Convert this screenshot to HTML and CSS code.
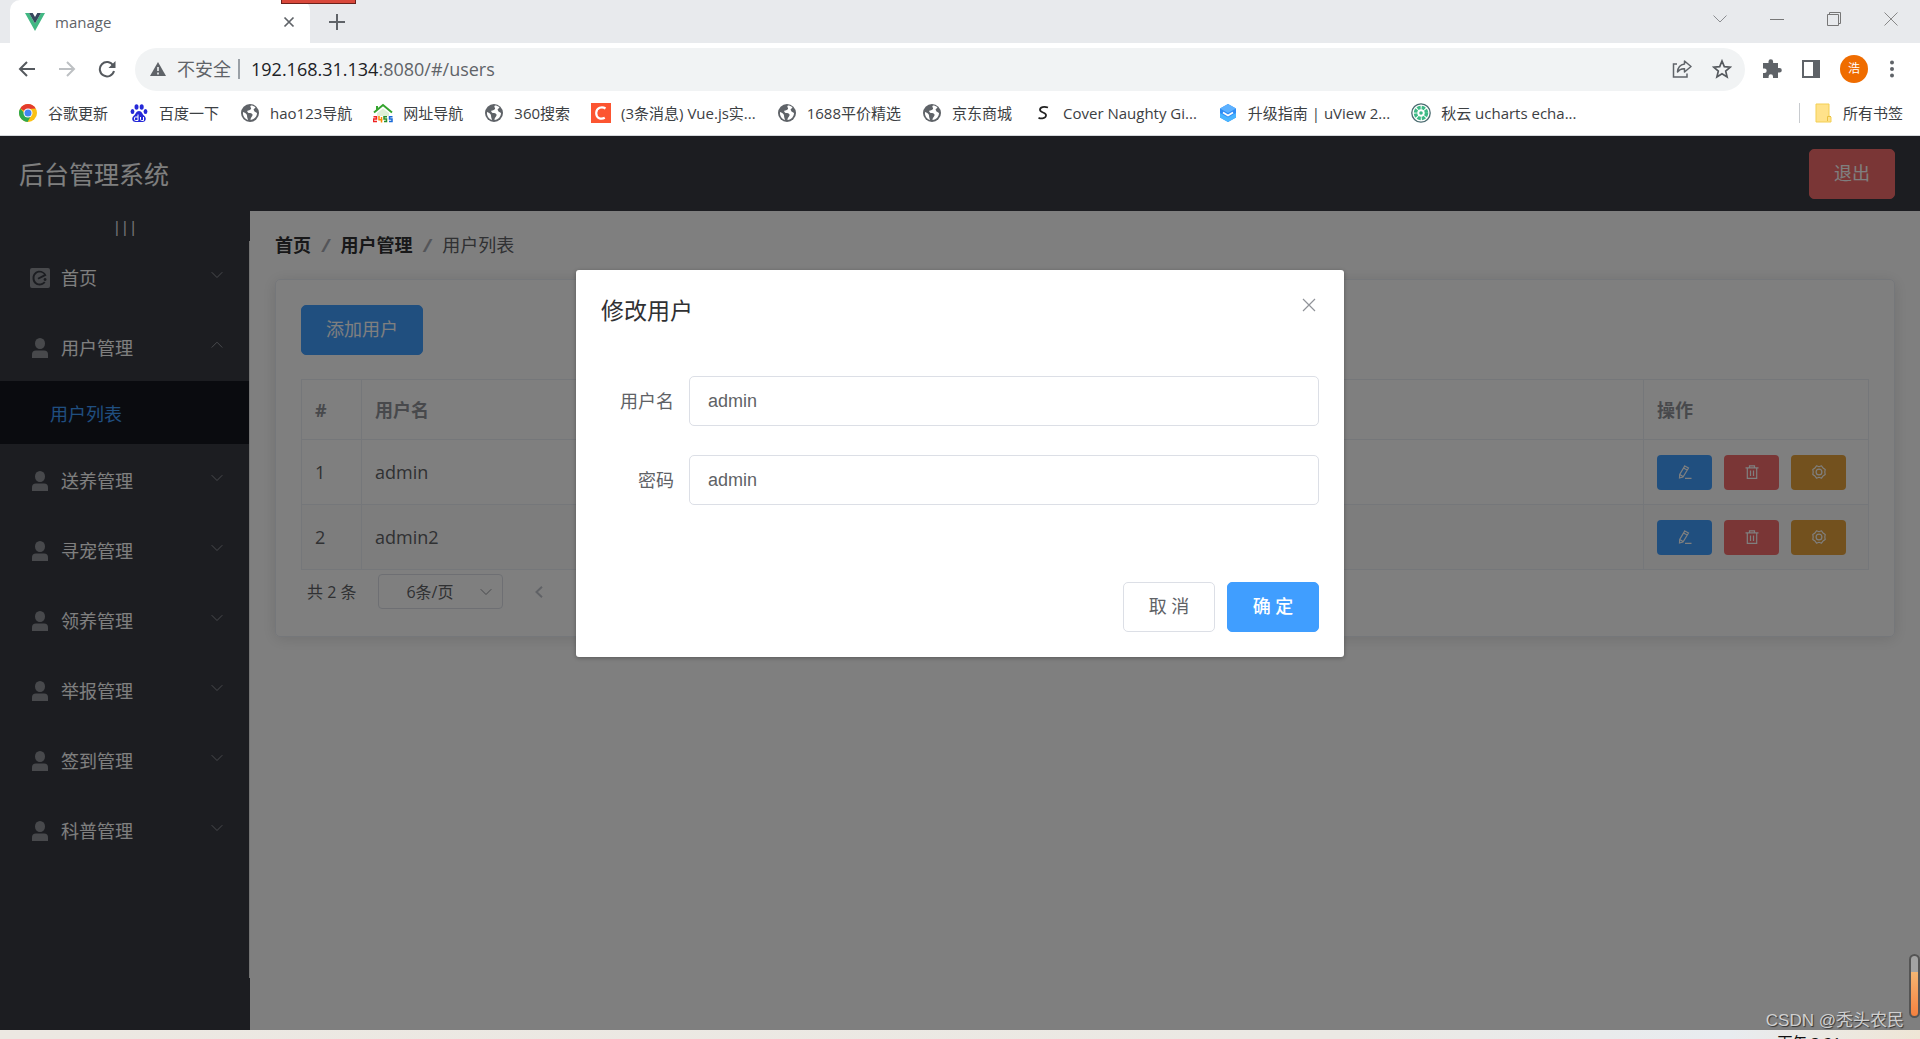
FILE: index.html
```html
<!DOCTYPE html>
<html lang="zh-CN">
<head>
<meta charset="utf-8">
<title>manage</title>
<link rel="stylesheet" href="styles.css">
</head>
<body>
<svg class="sprite" aria-hidden="true">
  <symbol id="globe" viewBox="0 0 20 20"><circle cx="10" cy="10" r="9" fill="#5f6368"/><path d="M11 2.500C9 4 12.500 5 10.500 6.500S6.500 7 7.500 9s4.500.5 5 2.500-2 2.500-2 5.500c4-.5 6.500-3.500 6.500-7l-2.500-1.500-1-2 2-2C14 3 12.500 2.500 11 2.500zM3 9c1.500.5 4 1.500 4 3.500S8 16 8 17c-3-1-5.500-4-5-8z" fill="#fff"/></symbol>
  <symbol id="user" viewBox="0 0 20 20"><ellipse cx="10" cy="5.500" rx="5" ry="5.500"/><path d="M2 20v-3.500Q2 12.500 6 12.500h8q4 0 4 4V20z"/></symbol>
  <symbol id="down" viewBox="0 0 12 8"><path d="M.7 1.200 6 6.500l5.300-5.300" fill="none" stroke="currentColor"/></symbol>
  <symbol id="up" viewBox="0 0 12 8"><path d="M.7 6.500 6 1.200l5.300 5.300" fill="none" stroke="currentColor"/></symbol>
  <symbol id="edit" viewBox="0 0 14 14"><path d="M6.800.9 10.500 3 5 12l-3.500 1 .2-3.600zM5.500 3l3.700 2.100M1.800 9.400 5 11.500M7 13.300h6.500" fill="none" stroke="currentColor" stroke-width="1.200"/></symbol>
  <symbol id="trash" viewBox="0 0 14 14"><path d="M.5 2.800h13M4.500 2.500V.8h5v1.700M2.300 3v10.300h9.400V3M5.500 5.500v5.500M8.500 5.500v5.500" fill="none" stroke="currentColor" stroke-width="1.200"/></symbol>
  <symbol id="gear" viewBox="0 0 14 14"><circle cx="7" cy="7" r="2.900" fill="none" stroke="currentColor" stroke-width="1.200"/><path d="M4.500.8 7 1.700l2.500-.9L11 3l2.200 1.500L12.800 7l.4 2.500L11 11l-1.500 2.200L7 12.300l-2.500.9L3 11 .8 9.500 1.200 7 .8 4.500 3 3z" fill="none" stroke="currentColor" stroke-width="1.200" stroke-linejoin="round"/></symbol>
</svg>

<header class="browser">
  <div class="tabstrip">
    <div class="tab">
      <svg width="20" height="18" viewBox="0 0 20 18"><path d="M0 0h4l6 10.500L16 0h4L10 18z" fill="#41b883"/><path d="M4 0h3.700L10 4l2.300-4H16l-6 10.500z" fill="#35495e"/></svg>
      <span class="tab-title">manage</span>
      <button class="icon-btn" aria-label="关闭标签页"><svg width="12" height="12" viewBox="0 0 12 12"><path d="m1.500 1.500 9 9m0-9-9 9" stroke="#5f6368" stroke-width="1.700"/></svg></button>
    </div>
    <button class="icon-btn new-tab" aria-label="新标签页"><svg width="16" height="16" viewBox="0 0 16 16"><path d="M8 0v16M0 8h16" stroke="#5f6368" stroke-width="2"/></svg></button>
    <span class="recorder"></span>
    <div class="window-controls">
      <button class="icon-btn" aria-label="搜索标签页"><svg width="14" height="14" viewBox="0 0 14 14"><path d="m.5 3.500 6.500 6.500 6.500-6.500" fill="none" stroke="#8b8d91"/></svg></button>
      <button class="icon-btn" aria-label="最小化"><svg width="14" height="14" viewBox="0 0 14 14"><path d="M0 7.500h14" stroke="#777"/></svg></button>
      <button class="icon-btn" aria-label="还原"><svg width="14" height="14" viewBox="0 0 14 14"><path d="M.5 2.500h11v11H.5zM2.500 2.500v-2h11v11h-2" fill="none" stroke="#777"/></svg></button>
      <button class="icon-btn" aria-label="关闭"><svg width="14" height="14" viewBox="0 0 14 14"><path d="m.5.5 13 13m0-13-13 13" stroke="#888"/></svg></button>
    </div>
  </div>
  <div class="toolbar">
    <div class="nav">
      <button class="icon-btn" aria-label="后退"><svg width="18" height="18" viewBox="0 0 18 18"><path d="M17 9H2m7-7L2 9l7 7" fill="none" stroke="#55595e" stroke-width="2"/></svg></button>
      <button class="icon-btn" aria-label="前进"><svg width="18" height="18" viewBox="0 0 18 18"><path d="M1 9h15M9 2l7 7-7 7" fill="none" stroke="#bdc0c3" stroke-width="2"/></svg></button>
      <button class="icon-btn" aria-label="刷新"><svg width="18" height="18" viewBox="0 0 18 18"><path d="M15.200 5.500A7.200 7.200 0 1 0 16 11" fill="none" stroke="#55595e" stroke-width="2"/><path d="M17.500 1v7h-7z" fill="#55595e"/></svg></button>
    </div>
    <div class="omnibox">
      <svg width="16" height="14" viewBox="0 0 16 14"><path d="M8 0l8 14H0z" fill="#5f6368"/><path d="M8 5v4M8 10.500v2" stroke="#f1f3f4" stroke-width="1.600"/></svg>
      <span class="insecure">不安全</span>
      <span class="url"><b>192.168.31.134</b>:8080/#/users</span>
      <button class="icon-btn" aria-label="分享"><svg width="20" height="20" viewBox="0 0 20 20"><path d="M5 5H1.500v13H15v-3.500" fill="none" stroke="#5f6368" stroke-width="1.500"/><path d="M12.500 2 19 7.500 12.500 13v-3.200Q8 9.500 5.500 13 6 6 12.500 5z" fill="none" stroke="#5f6368" stroke-width="1.500" stroke-linejoin="round"/></svg></button>
      <button class="icon-btn" aria-label="收藏"><svg width="20" height="20" viewBox="0 0 20 20"><path d="m10 2 2.300 5.600 6 .5-4.600 4 1.400 5.900-5.100-3.200L4.900 18l1.400-5.900-4.600-4 6-.5z" fill="none" stroke="#55595e" stroke-width="1.700"/></svg></button>
    </div>
    <div class="actions">
      <button class="icon-btn" aria-label="扩展程序"><svg width="20" height="20" viewBox="0 0 20 20"><path d="M1 4h5.500V2.500a2.300 2.300 0 0 1 4.600 0V4H16v5h1.500a2.300 2.300 0 0 1 0 4.600H16V19h-5v-1.500a2.200 2.200 0 0 0-4.400 0V19H1v-5h1.500a2.200 2.200 0 0 0 0-4.400H1z" fill="#5f6368"/></svg></button>
      <button class="icon-btn" aria-label="侧边栏"><svg width="18" height="18" viewBox="0 0 18 18"><path d="M0 0h18v18H0zm2 2v14h9V2z" fill="#5f6368" fill-rule="evenodd"/></svg></button>
      <button class="avatar">浩</button>
      <button class="icon-btn more" aria-label="菜单"><svg width="4" height="18" viewBox="0 0 4 18"><g fill="#5f6368"><circle cx="2" cy="2.500" r="2"/><circle cx="2" cy="9" r="2"/><circle cx="2" cy="15.500" r="2"/></g></svg></button>
    </div>
  </div>
  <nav class="bookmarks">
    <a href="#"><svg viewBox="0 0 20 20"><circle cx="10" cy="10" r="9" fill="#fbc116"/><path d="M10 10 2.200 5.500A9 9 0 0 1 17.800 5.500L10 6z" fill="#e33b2e"/><path d="M10 14 2.200 5.500A9 9 0 0 0 9.500 19l4-7z" fill="#2da94f"/><circle cx="10" cy="10" r="4.500" fill="#fff"/><circle cx="10" cy="10" r="3.500" fill="#4285f4"/></svg>谷歌更新</a>
    <a href="#"><svg viewBox="0 0 20 20" fill="#2529d8"><ellipse cx="7.500" cy="4" rx="2" ry="2.800"/><ellipse cx="12.700" cy="4" rx="2" ry="2.800"/><ellipse cx="3.500" cy="8.500" rx="1.900" ry="2.500"/><ellipse cx="16.500" cy="8.500" rx="1.900" ry="2.500"/><path d="M10 8c3 0 3 3 5.500 5 2.500 2.500 1 6-2 6h-7c-3 0-4.500-3.500-2-6C7 11 7 8 10 8z"/><path d="M9 11.500v6H6.500q-1 0-1-1V15q0-1 1-1H9m2.500 0v2.500q0 1 1 1h2V14" fill="none" stroke="#fff"/></svg>百度一下</a>
    <a href="#"><svg><use href="#globe"/></svg>hao123导航</a>
    <a href="#"><svg viewBox="0 0 20 20"><path d="M1 9.500 10 2l9 7.500M4 3v4" fill="none" stroke="#35a42e" stroke-width="2"/><path d="M4 10l6-4.500L16 10v3H4z" fill="#dff0d8"/><path d="M.5 13.700h3v2.300h-3v2.500H4" fill="none" stroke="#e22" stroke-width="1.500"/><path d="M6 13v3.800h3.500M8.500 14v5.500" fill="none" stroke="#f80" stroke-width="1.500"/><path d="M14 13.700h-3V16h2.500v2.500H11" fill="none" stroke="#2a8f2a" stroke-width="1.500"/><path d="M19.500 13.700h-3V16H19v2.500h-3" fill="none" stroke="#1668d8" stroke-width="1.500"/></svg>网址导航</a>
    <a href="#"><svg><use href="#globe"/></svg>360搜索</a>
    <a href="#"><svg viewBox="0 0 20 20"><path d="M0 0h20v20H0z" fill="#fc5531"/><path d="M14.500 5.500C11 3 5.500 4.500 5.200 10c0 5.500 5 6.700 8.600 4.800" fill="none" stroke="#fff" stroke-width="2.200"/></svg>(3条消息) Vue.js实...</a>
    <a href="#"><svg><use href="#globe"/></svg>1688平价精选</a>
    <a href="#"><svg><use href="#globe"/></svg>京东商城</a>
    <a href="#"><svg viewBox="0 0 20 20"><path d="M15 4.500C11 3 7 4 7 6.800 7 10 13.500 9 13 12.500c-.3 3-4.500 3.500-7.500 2.300" fill="none" stroke="#222" stroke-width="1.800"/></svg>Cover Naughty Gi...</a>
    <a href="#"><svg viewBox="0 0 20 20"><path d="m10 1 8 4.500v9L10 19l-8-4.500v-9z" fill="#2f8cf5"/><path d="m10 1 8 4.500L10 10 2 5.500z" fill="#5db1ff"/><path d="m2 10 8 4.500 8-4.500v4.500L10 19l-8-4.500z" fill="#49b5ff"/><path d="m5 9.500 5 3 5-3" fill="none" stroke="#fff" stroke-width="1.700"/></svg>升级指南 | uView 2...</a>
    <a href="#"><svg viewBox="0 0 20 20"><circle cx="10" cy="10" r="9.200" fill="#fff" stroke="#4b6b70" stroke-width="1.300"/><circle cx="10" cy="10" r="5.500" fill="none" stroke="#3dba85" stroke-width="3.500" stroke-dasharray="3.300 1.020"/><circle cx="10" cy="10" r="1.800" fill="#3dba85"/></svg>秋云 ucharts echa...</a>
    <a href="#" class="all-bookmarks"><svg viewBox="0 0 20 20"><path d="M3 1h13v12l2 1v5H3z" fill="#ffe28a" stroke="#f3cf55"/><path d="M14.500 18v-4.500H18" fill="none" stroke="#e8c040"/></svg>所有书签</a>
  </nav>
</header>

<div class="page">
  <header class="app-header">
    <span>后台管理系统</span>
    <button class="btn danger">退出</button>
  </header>
  <div class="app-body">
    <aside class="sidebar">
      <button class="toggle">|||</button>
      <ul class="menu">
        <li><a href="#" class="item"><svg class="glyph" viewBox="0 0 20 20"><path fill-rule="evenodd" d="M2 0h16q2 0 2 2v16q0 2-2 2H2q-2 0-2-2V2q0-2 2-2zm14.500 7.500C13 0 2.500 2 2.500 10c0 8 9 9.500 13 4.500l-1.500-1c-3.500 4-9.500 2-9.500-3.500C4.500 4.500 11 3 14 6.500L7.500 10l1 1.500zM15 10a1.500 1.500 0 1 0 .1 0z"/></svg>首页<svg class="arrow"><use href="#down"/></svg></a></li>
        <li><a href="#" class="item"><svg class="glyph"><use href="#user"/></svg>用户管理<svg class="arrow"><use href="#up"/></svg></a>
          <ul class="submenu"><li><a href="#">用户列表</a></li></ul></li>
        <li><a href="#" class="item"><svg class="glyph"><use href="#user"/></svg>送养管理<svg class="arrow"><use href="#down"/></svg></a></li>
        <li><a href="#" class="item"><svg class="glyph"><use href="#user"/></svg>寻宠管理<svg class="arrow"><use href="#down"/></svg></a></li>
        <li><a href="#" class="item"><svg class="glyph"><use href="#user"/></svg>领养管理<svg class="arrow"><use href="#down"/></svg></a></li>
        <li><a href="#" class="item"><svg class="glyph"><use href="#user"/></svg>举报管理<svg class="arrow"><use href="#down"/></svg></a></li>
        <li><a href="#" class="item"><svg class="glyph"><use href="#user"/></svg>签到管理<svg class="arrow"><use href="#down"/></svg></a></li>
        <li><a href="#" class="item"><svg class="glyph"><use href="#user"/></svg>科普管理<svg class="arrow"><use href="#down"/></svg></a></li>
      </ul>
    </aside>
    <main class="main">
      <nav class="breadcrumb"><a href="#">首页</a><i>/</i><a href="#">用户管理</a><i>/</i><span>用户列表</span></nav>
      <section class="card">
        <button class="btn primary">添加用户</button>
        <table class="users">
          <colgroup><col class="col-index"><col><col class="col-actions"></colgroup>
          <thead><tr><th>#</th><th>用户名</th><th>操作</th></tr></thead>
          <tbody>
            <tr><td>1</td><td>admin</td><td><div class="row-actions"><button class="mini primary" aria-label="编辑"><svg><use href="#edit"/></svg></button><button class="mini danger" aria-label="删除"><svg><use href="#trash"/></svg></button><button class="mini warning" aria-label="设置"><svg><use href="#gear"/></svg></button></div></td></tr>
            <tr><td>2</td><td>admin2</td><td><div class="row-actions"><button class="mini primary" aria-label="编辑"><svg><use href="#edit"/></svg></button><button class="mini danger" aria-label="删除"><svg><use href="#trash"/></svg></button><button class="mini warning" aria-label="设置"><svg><use href="#gear"/></svg></button></div></td></tr>
          </tbody>
        </table>
        <div class="pagination">
          <span>共 2 条</span>
          <span class="size"><select aria-label="每页条数"><option>6条/页</option></select><svg class="arrow"><use href="#down"/></svg></span>
          <button class="icon-btn" aria-label="上一页"><svg width="8" height="12" viewBox="0 0 8 12"><path d="M7 .8 1.500 6 7 11.200" fill="none" stroke="#c0c4cc" stroke-width="2"/></svg></button>
        </div>
      </section>
    </main>
  </div>

  <div class="overlay">
    <form class="dialog" role="dialog" aria-labelledby="dialog-title">
      <header class="dialog-header">
        <h2 id="dialog-title">修改用户</h2>
        <button type="button" class="icon-btn" aria-label="关闭"><svg width="14" height="14" viewBox="0 0 14 14"><path d="m1 1 12 12m0-12L1 13" stroke="#909399" stroke-width="1.200"/></svg></button>
      </header>
      <div class="dialog-body">
        <div class="field"><label for="username">用户名</label><input id="username" type="text" value="admin"></div>
        <div class="field"><label for="password">密码</label><input id="password" type="text" value="admin"></div>
      </div>
      <footer class="dialog-footer">
        <button type="button" class="btn">取 消</button>
        <button type="button" class="btn primary strong">确 定</button>
      </footer>
    </form>
  </div>
  <span class="gauge"></span>
  <span class="watermark">CSDN @秃头农民</span>
</div>
<footer class="taskbar"><span>下午 3:21</span></footer>
</body>
</html>
```
FILE: styles.css
```css
* { box-sizing: border-box; }
body {
  margin: 0;
  height: 100vh;
  display: flex;
  flex-direction: column;
  overflow: hidden;
  font: 18px/24px "Open Sans", "Noto Sans CJK SC", sans-serif;
  color: #606266;
}
button, input, select { font: inherit; color: inherit; }
a { color: inherit; text-decoration: none; }
ul { list-style: none; margin: 0; padding: 0; }
svg { display: block; flex: none; }
.sprite { position: absolute; width: 0; height: 0; }
.icon-btn { border: 0; padding: 0; background: none; flex: none; }

/* browser window */
.browser { flex: none; background: #fff; border-bottom: 1px solid #d5d8dc; color: #3c4043; }
.tabstrip { position: relative; display: flex; align-items: center; height: 43px; padding-left: 10px; background: #e8eaed; }
.tab {
  display: flex;
  align-items: center;
  gap: 10px;
  width: 300px;
  height: 43px;
  padding: 0 15px;
  border-radius: 10px 10px 0 0;
  background: #fff;
  font-size: 15px;
  color: #5f6368;
}
.tab-title { flex: 1; }
.new-tab { margin-left: 19px; }
.recorder { position: absolute; left: 281px; top: 0; width: 75px; height: 4px; background: #d9483b; border: 1px solid #6b211b; border-top: 0; }
.window-controls { display: flex; gap: 43px; margin-left: auto; padding: 0 22px 6px 0; }
.toolbar { display: flex; align-items: center; height: 52px; padding-right: 26px; }
.nav { display: flex; gap: 22px; width: 135px; padding-left: 18px; }
.omnibox {
  flex: 1;
  display: flex;
  align-items: center;
  height: 43px;
  padding: 0 13px 0 15px;
  border-radius: 22px;
  background: #f1f3f4;
  color: #5f6368;
}
.insecure { margin-left: 11px; padding-right: 7px; border-right: 2px solid #9aa0a6; line-height: 20px; }
.url { flex: 1; margin-left: 11px; }
.url b { font-weight: 400; color: #202124; }
.omnibox .icon-btn + .icon-btn { margin-left: 20px; }
.actions { display: flex; align-items: center; gap: 20px; padding-left: 17px; }
.more { margin-left: 2px; }
.avatar { width: 28px; height: 28px; padding: 0; border: 0; border-radius: 50%; background: #ef6c00; color: #fff; font-size: 12px; line-height: 28px; }
.bookmarks { display: flex; align-items: center; gap: 21px; height: 40px; padding: 0 17px 4px 18px; font-size: 15px; white-space: nowrap; }
.bookmarks a { display: flex; align-items: center; gap: 10px; }
.bookmarks svg { width: 20px; height: 20px; }
.bookmarks .all-bookmarks { margin-left: auto; padding-left: 13px; border-left: 1px solid #c8cbcf; line-height: 20px; }

/* admin application */
.page { position: relative; flex: 1; min-height: 0; display: flex; flex-direction: column; }
.app-header {
  display: flex;
  align-items: center;
  justify-content: space-between;
  flex: none;
  height: 75px;
  padding: 0 25px 0 19px;
  background: #383b43;
  color: #fff;
  font-size: 25px;
}
.app-body { flex: 1; min-height: 0; display: flex; background: #fff; }
.btn {
  height: 50px;
  padding: 0 24px 2px;
  border: 1px solid #dcdfe6;
  border-radius: 5px;
  background: #fff;
  font-size: 18px;
  line-height: 44px;
}
.primary { background: #409eff; border-color: #409eff; color: #fff; }
.danger { background: #f56c6c; border-color: #f56c6c; color: #fff; }
.warning { background: #e6a23c; border-color: #e6a23c; color: #fff; }
.strong { font-weight: 500; }
.sidebar { flex: none; display: flex; flex-direction: column; width: 250px; padding-bottom: 52px; background: #383b43; color: #fff; }
.toggle { height: 30px; padding: 0; border: 0; background: none; line-height: 30px; color: #fff; font-size: 15px; }
.menu { flex: 1; border-right: 1px solid #e6e6e6; }
.item { display: flex; align-items: center; gap: 11px; height: 70px; padding: 3px 26px 0 30px; }
.glyph { width: 20px; height: 20px; fill: #909399; }
.arrow { width: 12px; height: 8px; margin-left: auto; color: #909399; }
.item .arrow { margin-bottom: 5px; }
.submenu a { display: flex; align-items: center; height: 63px; padding: 3px 0 0 50px; background: #15171e; color: #409eff; }
.main { flex: 1; min-width: 0; padding: 22px 25px; }
.breadcrumb { display: flex; gap: 11px; margin-bottom: 22px; }
.breadcrumb a { font-weight: 700; color: #303133; }
.breadcrumb i { color: #a8abb2; font-weight: 700; }
.card { padding: 25px; border: 1px solid #ebeef5; border-radius: 5px; box-shadow: 0 2px 15px rgba(0, 0, 0, .12); }
.users { width: 100%; margin-top: 24px; border-collapse: collapse; table-layout: fixed; }
.users th, .users td { height: 65px; padding: 0 13px; border: 1px solid #ebeef5; text-align: left; }
.users th { height: 60px; color: #909399; font-weight: 700; }
.users tbody tr:nth-child(even) { background: #fafafa; }
.col-index { width: 60px; }
.col-actions { width: 225px; }
.row-actions { display: flex; gap: 12px; }
.mini { display: grid; place-items: center; width: 55px; height: 35px; padding: 0; border: 0; border-radius: 4px; }
.mini svg { width: 14px; height: 14px; }
.pagination { display: flex; align-items: center; padding: 4px 6px 2px; font-size: 16px; }
.size { display: flex; align-items: center; width: 125px; height: 35px; margin: 0 32px 0 22px; border: 1px solid #dcdfe6; border-radius: 4px; padding-right: 10px; }
.size select { flex: 1; appearance: none; border: 0; background: none; padding: 0 0 0 27px; }

/* dialog */
.overlay { position: absolute; inset: 0; background: rgba(0, 0, 0, .5); }
.dialog { width: 40%; margin: 134px auto 0; border-radius: 3px; background: #fff; box-shadow: 0 1px 4px rgba(0, 0, 0, .3); }
.dialog-header { display: flex; justify-content: space-between; padding: 25px 28px 12px 25px; }
.dialog-header h2 { margin: 0; font-size: 23px; line-height: 30px; font-weight: 400; color: #303133; }
.dialog-header .icon-btn { height: 20px; }
.dialog-body { display: grid; gap: 29px; padding: 39px 25px 65px; }
.field { display: flex; align-items: center; }
.field label { width: 88px; padding-right: 15px; text-align: right; }
.field input { flex: 1; min-width: 0; height: 50px; padding: 0 18px; border: 1px solid #dcdfe6; border-radius: 5px; font: 18px "Liberation Sans", sans-serif; }
.dialog-footer { display: flex; justify-content: flex-end; gap: 12px; padding: 12px 25px 25px; }
.dialog-footer .btn { min-width: 92px; }

/* things floating over the page */
.gauge { position: absolute; right: 0; bottom: 12px; width: 11px; height: 64px; border: 2px solid #555; border-radius: 6px; background: linear-gradient(#a3a3a3 26%, #f5b673 26%, #f5813f); }
.watermark { position: absolute; right: 16px; bottom: -3px; color: #d0d0d0; text-shadow: 1px 1px 1px #333; font-family: "Liberation Sans", "Noto Sans CJK SC", sans-serif; font-size: 17px; }
.taskbar { flex: none; display: flex; justify-content: flex-end; height: 9px; padding-right: 79px; overflow: hidden; background: linear-gradient(90deg, #ece8e2, #ebe9e4 70%, #e8ecf0 90%, #efe6d6); color: #111; font-size: 15px; }
```
